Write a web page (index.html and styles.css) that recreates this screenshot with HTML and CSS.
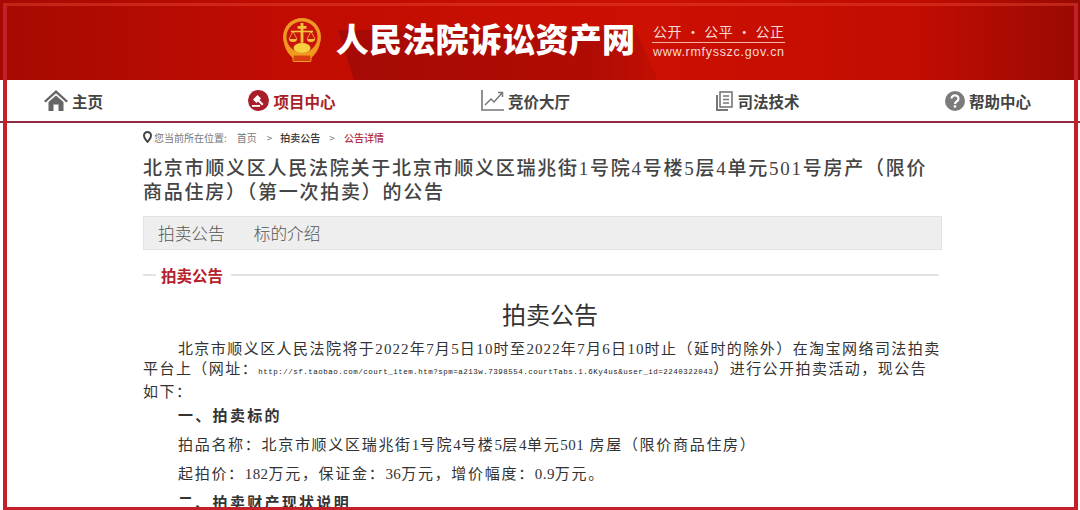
FILE: index.html
```html
<!DOCTYPE html>
<html lang="zh-CN">
<head>
    <meta charset="utf-8" />
    <title>公告详情</title>
    <link rel="stylesheet" href="styles.css">
</head>
<body>
    <div class="page">
        <div class="banner">
            <div class="banner-shade"></div>
            <div class="logo">
                <svg width="40" height="46" viewBox="0 0 40 46">
                    <circle cx="20" cy="20" r="19" fill="#ee9a22" />
                    <circle cx="20" cy="20" r="15.5" fill="#c8140c" />
                    <path d="M2 27 C6 40 14 44 20 44 C26 44 34 40 38 27 L33 30 C29 37 25 38 20 38 C15 38 11 37 7 30 Z" fill="#ef9a1c" />
                    <rect x="11" y="38" width="18" height="6.5" rx="1" fill="#d8400f" stroke="#f0a020" />
                    <path d="M18.6 6 h2.8 v3 h3 v2.8 h-3 v14 h-2.8 v-14 h-3 v-2.8 h3 Z" fill="#f7c23a" />
                    <path d="M9 14.5 h22" stroke="#f7c23a" stroke-width="1.6" />
                    <path d="M7 22 a4 3 0 0 0 8 0 Z M25 22 a4 3 0 0 0 8 0 Z" fill="#f7c23a" />
                    <path d="M11 14.5 l-4 7.5 M11 14.5 l4 7.5 M29 14.5 l-4 7.5 M29 14.5 l4 7.5" stroke="#f7c23a" stroke-width=".8" />
                    <ellipse cx="20" cy="31" rx="8.5" ry="5" fill="#f7d040" />
                </svg>
            </div>
            <div class="site-name">人民法院诉讼资产网</div>
            <div class="slogan">
                <div class="slogan-top">公开 · 公平 · 公正</div>
                <div class="slogan-url">www.rmfysszc.gov.cn</div>
            </div>
        </div>

        <div class="nav">
            <a class="nav-item">
                <svg width="24" height="21" viewBox="0 0 24 21">
                    <path d="M12 0 L0 11 L1.6 12.6 L12 3.2 L22.4 12.6 L24 11 Z" fill="#666" />
                    <path d="M4.5 12 L12 5.4 L19.5 12 V21 H14.5 V14.5 H9.5 V21 H4.5 Z" fill="#666" />
                </svg>
                主页
            </a>
            <a class="nav-item nav-active">
                <svg width="21" height="21" viewBox="0 0 21 21">
                    <circle cx="10.5" cy="10.5" r="10.5" fill="#a81f2a" />
                    <path d="M9.5 5 L13 8.5 L11.5 10 L15.5 14 L14 15.5 L10 11.5 L8.5 13 L5 9.5 Z" fill="#fff" />
                    <rect x="4" y="15" width="8" height="1.8" fill="#fff" />
                </svg>
                项目中心
            </a>
            <a class="nav-item">
                <svg width="23" height="21" viewBox="0 0 23 21">
                    <path d="M1 0 V20 H23" fill="none" stroke="#777" stroke-width="1.6" />
                    <path d="M4 15 L10 9 L13 12 L21 3 M17 2.5 H21.5 V7" fill="none" stroke="#777" stroke-width="1.5" />
                </svg>
                竞价大厅
            </a>
            <a class="nav-item">
                <svg width="18" height="20" viewBox="0 0 18 20">
                    <rect x="5" y="1" width="12" height="15" fill="none" stroke="#777" stroke-width="1.6" />
                    <path d="M8 5 H14 M8 8.5 H14 M8 12 H14" stroke="#777" stroke-width="1.4" />
                    <path d="M2 4 V19 H13" fill="none" stroke="#777" stroke-width="2" />
                </svg>
                司法技术
            </a>
            <a class="nav-item">
                <svg width="20" height="20" viewBox="0 0 20 20">
                    <circle cx="10" cy="10" r="10" fill="#7b7b7b" />
                    <path d="M6.5 7.5 a3.5 3.2 0 1 1 5.4 2.8 c-1.4 .9 -1.9 1.4 -1.9 2.6" fill="none" stroke="#fff" stroke-width="2.2" />
                    <rect x="8.8" y="14.2" width="2.4" height="2.4" fill="#fff" />
                </svg>
                帮助中心
            </a>
        </div>

        <div class="content">
            <div class="crumbs">
                <svg width="9" height="12" viewBox="0 0 9 12">
                    <path d="M4.5 1 a3.5 3.5 0 0 1 3.5 3.5 c0 2.6 -3.5 6.4 -3.5 6.4 s-3.5 -3.8 -3.5 -6.4 a3.5 3.5 0 0 1 3.5 -3.5 Z" fill="none" stroke="#444" stroke-width="2" />
                </svg>
                <span class="crumb-label">您当前所在位置:</span>
                <span class="crumb-label">首页</span>
                <span class="crumb-sep">&gt;</span>
                <span class="crumb-strong">拍卖公告</span>
                <span class="crumb-sep crumb-sep-last">&gt;</span>
                <span class="crumb-now">公告详情</span>
            </div>

            <h1 class="title">北京市顺义区人民法院关于北京市顺义区瑞兆街1号院4号楼5层4单元501号房产（限价<br>商品住房）（第一次拍卖）的公告</h1>

            <div class="tabs">
                <span class="tab">拍卖公告</span>
                <span class="tab">标的介绍</span>
            </div>

            <div class="section-head">
                <span class="section-name">拍卖公告</span>
            </div>

            <div class="notice">
                <h2 class="notice-title">拍卖公告</h2>
                <p class="para"><span class="lead">　　</span>北京市顺义区人民法院将于<span class="num">2022</span>年<span class="num">7</span>月<span class="num">5</span>日<span class="num">10</span>时至<span class="num">2022</span>年<span class="num">7</span>月<span class="num">6</span>日<span class="num">10</span>时止（延时的除外）在淘宝网络司法拍卖<br>平台上（网址：<span class="url">http://sf.taobao.com/court_item.htm?spm=a213w.7398554.courtTabs.1.6Ky4us&amp;user_id=2240322043</span>）进行公开拍卖活动，现公告<br>如下：</p>
                <p class="row row-head">一、拍卖标的</p>
                <p class="row">拍品名称：北京市顺义区瑞兆街<span class="num">1</span>号院<span class="num">4</span>号楼<span class="num">5</span>层<span class="num">4</span>单元<span class="num">501</span> 房屋（限价商品住房）</p>
                <p class="row">起拍价：<span class="num">182</span>万元，保证金：<span class="num">36</span>万元，增价幅度：<span class="num">0.9</span>万元。</p>
                <p class="row row-head">二、拍卖财产现状说明</p>
            </div>
        </div>

        <div class="frame"></div>
    </div>
</body>
</html>
```

FILE: styles.css
```css
html, body {
    margin: 0px;
    height: 100%;
    background-color: #FFFFFF;
    overflow: hidden;
}

.page {
    position: relative;
    width: 1080px;
    height: 510px;
    overflow: hidden;
    font-family: "Liberation Serif", "Noto Sans CJK SC", serif;
    color: #333333;
}

.banner {
    position: relative;
    height: 80px;
    display: flex;
    align-items: center;
    justify-content: center;
    background: linear-gradient(90deg, #a50a02 0%, #c00c02 25%, #cc1002 60%, #c20c02 85%, #980a02 100%);
    box-sizing: border-box;
    padding-right: 13px;
}

.banner-shade {
    position: absolute;
    left: 338px;
    top: 30px;
    width: 320px;
    height: 50px;
    clip-path: polygon(0 0, 93% 0, 100% 100%, 5% 100%);
    background: linear-gradient(90deg, #a60a04, #b00c04 80%, #c20e03);
}

.logo {
    position: relative;
    width: 40px;
    height: 46px;
    margin-right: 14px;
}

.site-name {
    position: relative;
    font-family: "Noto Sans CJK SC", sans-serif;
    font-weight: 900;
    font-size: 33px;
    line-height: 40px;
    letter-spacing: 0.3px;
    padding-bottom: 4px;
    color: #FFFFFF;
    white-space: nowrap;
    margin-right: 17px;
}

.slogan {
    position: relative;
    width: 133px;
    font-family: "Noto Sans CJK SC", sans-serif;
    color: #F3D9D2;
    text-align: center;
}

.slogan-top {
    font-size: 14px;
    line-height: 22px;
    border-bottom: 1px solid #EBB5A8;
    letter-spacing: 0.6px;
    white-space: nowrap;
}

.slogan-url {
    font-family: "Liberation Sans", sans-serif;
    font-size: 12.5px;
    line-height: 18px;
    letter-spacing: 0.7px;
    white-space: nowrap;
}

.nav {
    display: flex;
    align-items: center;
    justify-content: space-between;
    height: 43px;
    padding: 0px 49px 0px 44px;
    border-bottom: 2px solid #8E2B3E;
    box-sizing: border-box;
    font-family: "Noto Sans CJK SC", sans-serif;
}

.nav-item {
    display: flex;
    align-items: center;
    gap: 4px;
    font-size: 15.5px;
    font-weight: 700;
    color: #444444;
    white-space: nowrap;
}

.nav-active {
    color: #A81F2A;
}

.content {
    width: 800px;
    margin-left: 143px;
}

.crumbs {
    display: flex;
    align-items: center;
    height: 16px;
    margin-top: 6px;
    font-family: "Noto Sans CJK SC", sans-serif;
    font-size: 10px;
    color: #777777;
    white-space: nowrap;
}

.crumbs svg {
    margin-right: 2px;
}

.crumb-label {
    margin-right: 10px;
}

.crumb-sep {
    margin-right: 8px;
}

.crumb-sep-last {
    margin-right: 9px;
}

.crumb-strong {
    color: #333333;
    font-weight: 500;
    margin-right: 9px;
}

.crumb-now {
    color: #B03048;
    font-weight: 500;
}

.title {
    margin: 12px 0px 0px 0px;
    font-size: 19px;
    font-weight: 500;
    line-height: 23.5px;
    letter-spacing: 1.75px;
    color: #444444;
    white-space: nowrap;
}

.tabs {
    display: flex;
    gap: 29px;
    height: 34px;
    margin-top: 12px;
    padding-left: 14px;
    align-items: center;
    background-color: #EEEEEE;
    border: 1px solid #E2E2E2;
    box-sizing: border-box;
    width: 799px;
    font-family: "Noto Sans CJK SC", sans-serif;
    font-size: 16.7px;
    font-weight: 300;
    color: #555555;
}

.section-head {
    display: flex;
    align-items: center;
    height: 20px;
    margin-top: 15px;
    width: 796px;
    font-family: "Noto Sans CJK SC", sans-serif;
    font-size: 15.5px;
    font-weight: 700;
    color: #B5202C;
    background: linear-gradient(#E4E4E4, #E4E4E4) center / 100% 2px no-repeat;
}

.section-name {
    background-color: #FFFFFF;
    margin-left: 13px;
    padding: 0px 8px 0px 5px;
    line-height: 20px;
}

.notice-title {
    margin: 16px 0px 0px 0px;
    padding-left: 14px;
    font-size: 24px;
    font-weight: 400;
    line-height: 30px;
    text-align: center;
    color: #333333;
}

.para {
    margin: 8px 0px 0px 0px;
    font-size: 15px;
    line-height: 20px;
    letter-spacing: 1.45px;
    white-space: nowrap;
}

.para .num {
    letter-spacing: 1.1px;
}

.lead {
    margin-right: 2px;
}

.url {
    font-family: "Liberation Mono", monospace;
    font-size: 7.5px;
    letter-spacing: 0.5px;
    color: #222222;
}

.row {
    margin: 0px;
    padding-left: 35px;
    font-size: 15px;
    line-height: 29px;
    letter-spacing: 1.7px;
    white-space: nowrap;
}

.row .num {
    letter-spacing: 0.4px;
}

.row-head {
    font-weight: 700;
    letter-spacing: 2.3px;
}

.para + .row {
    margin-top: 0px;
}

.frame {
    position: absolute;
    left: 3px;
    top: 3px;
    right: 2px;
    bottom: 0px;
    border-style: solid;
    border-width: 3px 4px;
    border-color: rgba(232, 70, 50, 0.45) #C3202A #C3202A #C3202A;
    pointer-events: none;
}
```
